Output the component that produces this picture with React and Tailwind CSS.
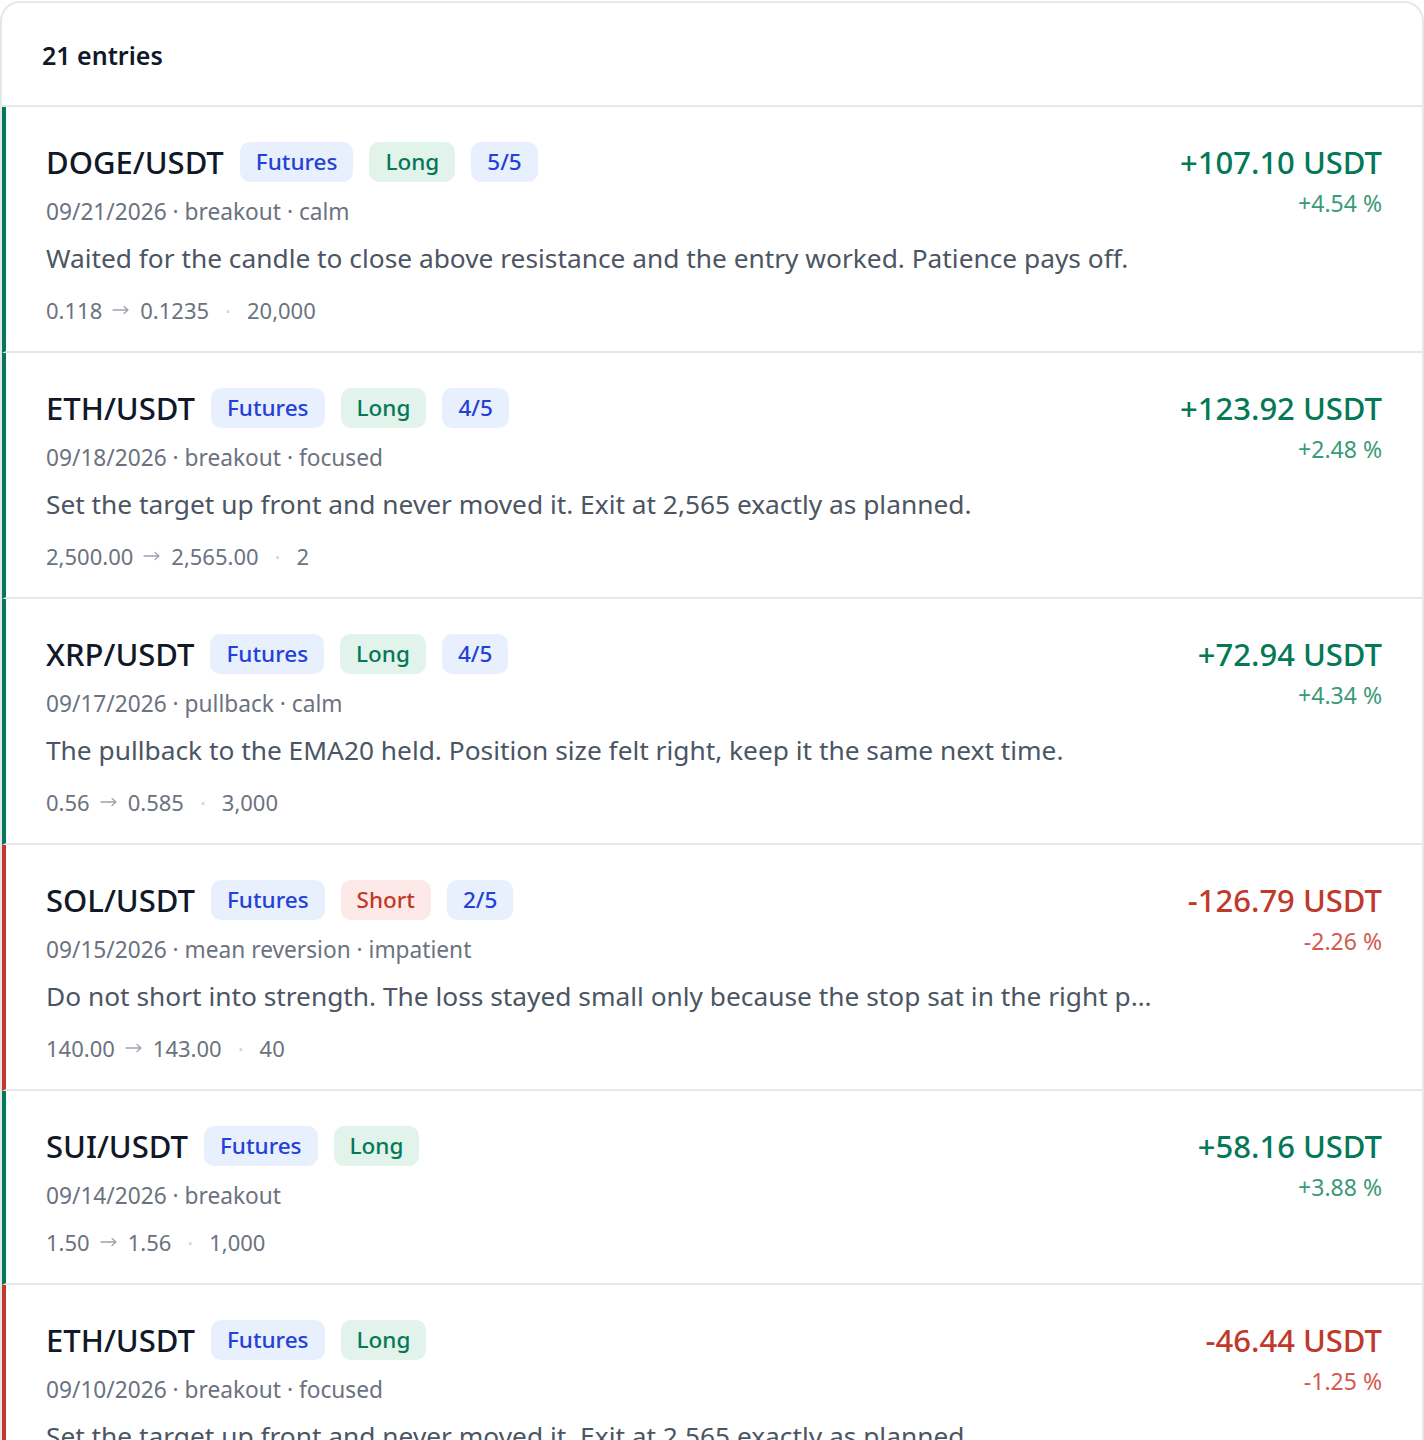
import React from "react";

const rows = [
  { pair: "DOGE/USDT", side: "Long", rating: "5/5", meta: "09/21/2026 · breakout · calm", note: "Waited for the candle to close above resistance and the entry worked. Patience pays off.", from: "0.118", to: "0.1235", qty: "20,000", pnl: "+107.10 USDT", pct: "+4.54 %", win: true },
  { pair: "ETH/USDT", side: "Long", rating: "4/5", meta: "09/18/2026 · breakout · focused", note: "Set the target up front and never moved it. Exit at 2,565 exactly as planned.", from: "2,500.00", to: "2,565.00", qty: "2", pnl: "+123.92 USDT", pct: "+2.48 %", win: true },
  { pair: "XRP/USDT", side: "Long", rating: "4/5", meta: "09/17/2026 · pullback · calm", note: "The pullback to the EMA20 held. Position size felt right, keep it the same next time.", from: "0.56", to: "0.585", qty: "3,000", pnl: "+72.94 USDT", pct: "+4.34 %", win: true },
  { pair: "SOL/USDT", side: "Short", rating: "2/5", meta: "09/15/2026 · mean reversion · impatient", note: "Do not short into strength. The loss stayed small only because the stop sat in the right place and I respected it.", from: "140.00", to: "143.00", qty: "40", pnl: "-126.79 USDT", pct: "-2.26 %", win: false },
  { pair: "SUI/USDT", side: "Long", rating: null, meta: "09/14/2026 · breakout", note: null, from: "1.50", to: "1.56", qty: "1,000", pnl: "+58.16 USDT", pct: "+3.88 %", win: true },
  { pair: "ETH/USDT", side: "Long", rating: null, meta: "09/10/2026 · breakout · focused", note: "Set the target up front and never moved it. Exit at 2,565 exactly as planned.", from: "2,500.00", to: "2,475.00", qty: "2", pnl: "-46.44 USDT", pct: "-1.25 %", win: false },
];

function Badge({ kind, children }) {
  const cls =
    kind === "blue"
      ? "bg-[#e8effd] text-[#2341d6]"
      : kind === "green"
      ? "bg-[#e2f3eb] text-[#047857]"
      : "bg-[#fde9e7] text-[#c0392b]";
  return (
    <span className={`inline-flex h-10 items-center rounded-[10px] px-4 text-[22.5px] font-medium ${cls}`}>
      {children}
    </span>
  );
}

function Arrow() {
  return (
    <svg width="18" height="10" viewBox="0 0 18 10" className="mx-[10px] shrink-0" aria-hidden="true">
      <path d="M1 5 H16 M12 1.5 L16 5 L12 8.5" fill="none" stroke="#9ca3af" strokeWidth="1.3" strokeLinecap="round" strokeLinejoin="round" />
    </svg>
  );
}

function Row({ r }) {
  return (
    <div
      className={`flex gap-8 border-b-2 border-l-4 border-b-gray-200 pb-[25px] pl-10 pr-10 pt-[35px] ${
        r.win ? "border-l-[#047857]" : "border-l-[#c0392b]"
      }`}
    >
      <div className="min-w-0 flex-1">
        <div className="flex h-10 items-center gap-4">
          <span className="text-[31px] font-medium leading-10 text-[#111827]">{r.pair}</span>
          <Badge kind="blue">Futures</Badge>
          <Badge kind={r.side === "Long" ? "green" : "red"}>{r.side}</Badge>
          {r.rating && <Badge kind="blue">{r.rating}</Badge>}
        </div>
        <div className="mt-[14px] text-[22.7px] leading-8 text-[#6b7280]">{r.meta}</div>
        {r.note && (
          <div className="mt-[12px] truncate text-[26.3px] leading-9 text-[#4b5563]">{r.note}</div>
        )}
        <div className={`${r.note ? "mt-[18px]" : "mt-[14px]"} flex items-center text-[22px] leading-8 text-[#6b7280]`}>
          <span>{r.from}</span>
          <Arrow />
          <span>{r.to}</span>
          <span className="mx-4 text-[#d1d5db]">·</span>
          <span>{r.qty}</span>
        </div>
      </div>
      <div className="shrink-0 text-right">
        <div className={`text-[31px] font-medium leading-10 ${r.win ? "text-[#047857]" : "text-[#c0392b]"}`}>
          {r.pnl}
        </div>
        <div className={`mt-[5px] text-[23px] leading-8 ${r.win ? "text-[#3a9a78]" : "text-[#d45a50]"}`}>
          {r.pct}
        </div>
      </div>
    </div>
  );
}

export default function App() {
  return (
    <div className="min-h-screen bg-white pt-px" style={{ fontFamily: '"Noto Sans", "Open Sans", sans-serif' }}>
      <div className="overflow-hidden rounded-[20px] border-2 border-gray-200 bg-white">
        <div className="flex h-[104px] items-center border-b-2 border-gray-200 px-10 pt-[3px]">
          <span className="text-[25px] font-semibold text-[#111827]">21 entries</span>
        </div>
        {rows.map((r, i) => (
          <Row key={i} r={r} />
        ))}
      </div>
    </div>
  );
}
